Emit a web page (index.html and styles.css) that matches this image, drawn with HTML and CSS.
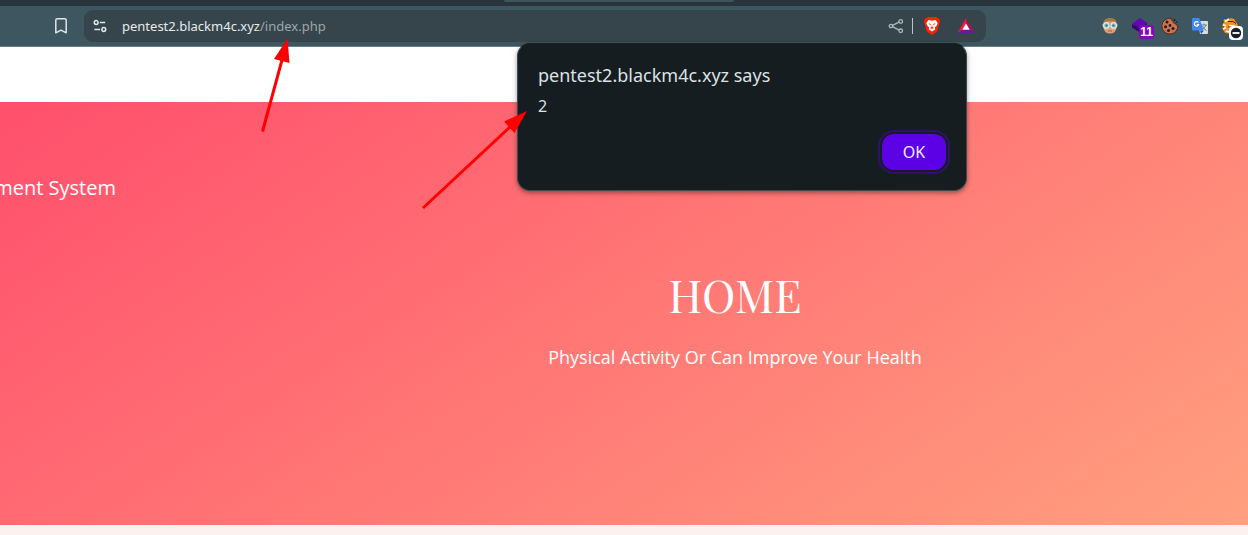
FILE: index.html
```html
<!DOCTYPE html>
<html lang="en">
<head>
<meta charset="utf-8">
<meta name="viewport" content="width=device-width, initial-scale=1">
<title>Home</title>
<link rel="stylesheet" href="styles.css">
</head>
<body>
<header class="browser">
  <div class="tabstrip"><div class="active-tab"></div></div>
  <div class="toolbar">
    <button class="icon-button" type="button" aria-label="Bookmark">
      <svg width="14" height="18" viewBox="0 0 14 18" fill="none" stroke="#dfe5e7" stroke-width="1.5" stroke-linejoin="round"><path d="M1.800 3.200Q1.800 1.700 3.300 1.700h7.400q1.500 0 1.500 1.500v12.600L7 13.100l-5.200 2.700z"/></svg>
    </button>
    <div class="address">
      <button class="icon-button" type="button" aria-label="Site information">
        <svg width="14" height="14" viewBox="0 0 14 14" fill="none" stroke="#e1e6e8" stroke-width="1.500"><circle cx="3.200" cy="3.500" r="1.900"/><path d="M6.800 3.500h5.400M1.300 10.500h5.800"/><circle cx="10.800" cy="10.500" r="1.900"/></svg>
      </button>
      <a class="url" href="#">pentest2.blackm4c.xyz<span class="url-path">/index.php</span></a>
      <button class="icon-button share" type="button" aria-label="Share">
        <svg width="16" height="16" viewBox="0 0 16 16" fill="none" stroke="#aeb7ba" stroke-width="1.300"><path d="M4.500 7.300l6.600-3.200M4.500 8.700l6.600 3.400"/><circle cx="3" cy="8" r="1.700"/><circle cx="12.700" cy="3.400" r="1.800"/><circle cx="12.700" cy="12.800" r="1.800"/></svg>
      </button>
      <span class="divider"></span>
      <button class="icon-button shield" type="button" aria-label="Shields">
        <svg width="18" height="20" viewBox="0 0 18 20"><path d="M4.500 1h9l1.200 1.300 1.600.1L17 5l-.5 1.500-1.700 7.300q-.4 1.500-1.800 2.500l-4 2.600-4-2.600q-1.400-1-1.800-2.500L1.500 6.500 1 5l.7-2.600 1.600-.1z" fill="#ff2000"/><path d="M5.500 4l3.500.7L12.500 4l2.200 2.900-.7 2.300-2.200 2.300.5 1.800L9 15.600l-3.300-2.300.5-1.800L4 9.200l-.7-2.300z" fill="#fff"/><path d="M5.400 7.200l2.500.8-.7 1.300zM12.600 7.200l-2.500.8.7 1.300zM9 9l.6 2.200 1.200.8L9 13l-1.800-1 1.200-.8z" fill="#ff2000"/></svg>
      </button>
      <button class="icon-button" type="button" aria-label="Rewards">
        <svg width="18" height="18" viewBox="0 0 18 18"><path d="M9 1v6L5.600 12.700.4 16z" fill="#ff123c"/><path d="M9 1l8.600 15-5.200-3.300L9 7z" fill="#a7125d"/><path d="M.4 16h17.200l-5.200-3.500H5.600z" fill="#69189b"/><path d="M9 6.500l3.700 6.300H5.300z" fill="#fff"/></svg>
      </button>
    </div>
    <nav class="extensions" aria-label="Extensions">
      <button class="icon-button" type="button" aria-label="Avatar">
        <svg width="18" height="18" viewBox="0 0 18 18"><path d="M2.500 8Q2 1.500 9 1.500T15.500 8v3q-1 5.500-6.500 5.500T2.500 11z" fill="#dfa176"/><path d="M2.300 6Q3 1 9 1t6.700 5L13 4.500H6z" fill="#a8783e"/><path d="M1 8h16" stroke="#60848c" stroke-width="2"/><circle cx="5.300" cy="8.500" r="3" fill="#a9cfd3" stroke="#edf5f3"/><circle cx="12.700" cy="8.500" r="3" fill="#a9cfd3" stroke="#edf5f3"/><circle cx="5.500" cy="8.500" r="1.300" fill="#467783"/><circle cx="12.500" cy="8.500" r="1.300" fill="#467783"/><path d="M7 14h4" stroke="#b35b48"/></svg>
      </button>
      <button class="icon-button badged" type="button" aria-label="Tools, 11">
        <svg width="18" height="18" viewBox="0 0 18 18"><path d="M8.500 1l7.500 4.500-7 5.500L1 7z" fill="#6108b4"/><path d="M1 7l8 4v4.500l-8-5z" fill="#360477"/><path d="M9 11l7-5.500v3l-7 7z" fill="#4c0798"/></svg>
        <span class="badge">11</span>
      </button>
      <button class="icon-button" type="button" aria-label="Cookies">
        <svg width="18" height="18" viewBox="0 0 18 18"><path d="M10 1.200a8 8 0 1 0 6.800 7.100q-2 .3-2.300-1.900-2.500.2-2.500-2.300Q9.800 3.500 10 1.200z" fill="#c77450" stroke="#54271c"/><g fill="#2c1917"><circle cx="6" cy="5" r="1.500"/><circle cx="4.500" cy="9.700" r="1.500"/><circle cx="9" cy="8.500" r="1.400"/><circle cx="7.500" cy="13.500" r="1.500"/><circle cx="12" cy="11.500" r="1.500"/><circle cx="13.500" cy="3" r="1"/><circle cx="15.700" cy="5" r=".8"/></g></svg>
      </button>
      <button class="icon-button" type="button" aria-label="Translate">
        <svg width="18" height="18" viewBox="0 0 18 18"><path d="M7 4h9q1 0 1 1v11q0 1-1 1H9z" fill="#d8dde0"/><path d="M10 8h6M13 6.500V8M11 12.500q3-1.500 4-4.500M11.500 9q1 3 4 4.500" stroke="#718188" fill="none"/><path d="M9 13.500h4L10 17z" fill="#2453b5"/><path d="M2 1h6.500l4 12.500H2q-1 0-1-1V2q0-1 1-1z" fill="#4285f4"/><path d="M7.300 5.500A2.200 2.200 0 1 0 7.700 7.500H5.700" fill="none" stroke="#fff" stroke-width="1.200"/></svg>
      </button>
      <button class="icon-button badged" type="button" aria-label="Proxy, disabled">
        <svg width="18" height="18" viewBox="0 0 18 18"><path d="M2 6l1-4 3 1q3-3 7-1l2 3 2 3-2 5-5 4-6-1-3-5z" fill="#f6901f"/><path d="M4 4.500l4-2.500M2 8l3 .5M2 12l3-1.500M8 8.500l6 .5M5 14l3 1" stroke="#fff" stroke-width="1.500"/><path d="M1 5h2M3 10H1M7 4.500h5l3 2M7 10h4" fill="none" stroke="#412b20"/></svg>
        <svg class="blocked" width="14" height="14" viewBox="0 0 14 14"><rect width="14" height="14" rx="4" fill="#fff"/><circle cx="7" cy="7" r="5.200" fill="#17202a"/><path d="M3.500 7h7" stroke="#fff" stroke-width="1.800"/></svg>
      </button>
    </nav>
  </div>
</header>
<main>
  <div class="topbar"></div>
  <section class="hero">
    <p class="brand"><span>ment System</span></p>
    <div class="intro">
      <h1>HOME</h1>
      <p>Physical Activity Or Can Improve Your Health</p>
    </div>
  </section>
</main>
<div class="dialog" role="alertdialog" aria-labelledby="dialog-title" aria-describedby="dialog-text">
  <h2 id="dialog-title">pentest2.blackm4c.xyz says</h2>
  <p id="dialog-text">2</p>
  <button class="ok" type="button">OK</button>
</div>
<svg class="arrows" width="540" height="220" viewBox="0 0 540 220" aria-hidden="true"><g stroke="#f00" stroke-width="3" fill="#f00"><path d="M262.500 131.500L282 60M423 208L511 126"/><path stroke="none" d="M287.500 38.500L289.500 63 274 59zM527 111L514.500 133 504 121.500z"/></g></svg>
</body>
</html>
```
FILE: styles.css
```css
* { box-sizing: border-box; }
body {
  margin: 0;
  min-height: 100vh;
  position: relative;
  background: #fcf1ee;
  font-family: "Noto Sans", sans-serif;
}
h1, h2, p { margin: 0; font-weight: 400; }
button { border: 0; padding: 0; background: none; font: inherit; cursor: pointer; }
svg { display: block; }

.tabstrip { height: 6px; padding-left: 504px; background: #28353c; }
.active-tab { width: 230px; height: 2px; background: #3e545d; border-radius: 0 0 6px 6px; }
.toolbar {
  display: flex;
  align-items: center;
  height: 41px;
  padding: 0 2px 1px 54px;
  background: #3e565f;
  border-bottom: 1px solid #6c7e85;
}
.icon-button { flex: none; }
.address {
  flex: 1;
  display: flex;
  align-items: center;
  height: 32px;
  margin: 0 115px 0 16px;
  padding: 0 11px 0 9px;
  border-radius: 9px;
  background: #35454b;
}
.url {
  flex: 1;
  margin-left: 15px;
  color: #e6eaeb;
  font-size: 13px;
  line-height: 20px;
  text-decoration: none;
}
.url-path { color: #9da8ac; }
.divider { width: 1px; height: 16px; margin: 0 10px 0 8px; background: #bcc4c6; }
.shield { margin-right: 16px; }
.extensions { display: flex; gap: 12px; padding-right: 7px; }
.badged { position: relative; }
.badge {
  position: absolute;
  left: 8px;
  top: 8px;
  width: 15px;
  height: 14px;
  border-radius: 3px;
  background: #8207bd;
  color: #fff;
  font: 700 12px/14px "Liberation Sans", sans-serif;
  text-align: center;
}
.blocked { position: absolute; left: 8px; top: 9px; }

.topbar { height: 55px; background: #fff; }
.hero {
  min-height: 423px;
  padding-top: 71px;
  background: linear-gradient(146deg, #ff4f6c, #ffa07f);
  color: #fff;
  font-family: "Open Sans", sans-serif;
}
.brand {
  display: flex;
  justify-content: flex-end;
  width: 116px;
  overflow: hidden;
  font-size: 20px;
  line-height: 30px;
  white-space: nowrap;
}
.intro { padding: 61px 0 0 222px; text-align: center; }
.intro h1 {
  font-family: "Playfair Display", "Liberation Serif", serif;
  font-size: 45px;
  line-height: 60px;
}
.intro p { margin-top: 18px; font-size: 18px; line-height: 30px; }

.dialog {
  position: absolute;
  left: 517px;
  top: 43px;
  width: 450px;
  display: flex;
  flex-direction: column;
  padding: 17px 20px 20px;
  border: 1px solid #3c4b51;
  border-top-color: #182024;
  border-radius: 13px;
  background: #151d20;
  box-shadow: 0 2px 5px #0006;
  color: #dce2e4;
}
.dialog h2 { font-size: 18px; line-height: 28px; }
.dialog p { margin-top: 5px; font-size: 16px; line-height: 24px; }
.ok {
  align-self: flex-end;
  width: 64px;
  height: 36px;
  margin-top: 16px;
  border-radius: 12px;
  outline: 2px solid #31106d;
  outline-offset: 2px;
  background: #5c00e6;
  color: #f2eaff;
  font-size: 16px;
}
.arrows { position: absolute; left: 0; top: 0; pointer-events: none; }
```
